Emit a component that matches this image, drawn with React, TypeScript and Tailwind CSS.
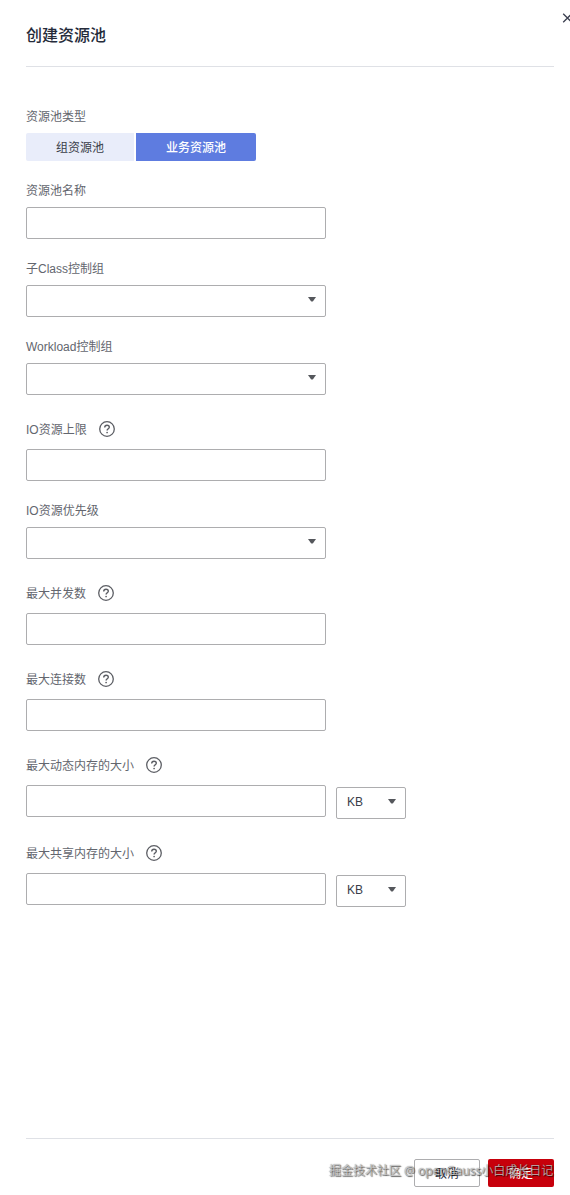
import type { ReactNode } from "react";

function HelpIcon() {
  return (
    <svg width="16" height="16" viewBox="0 0 16 16" fill="none" stroke="#5c5e64" className="shrink-0">
      <circle cx="8" cy="8" r="7.3" strokeWidth="1.3" />
      <path d="M5.7 6.4C5.7 5 6.6 4.2 8 4.2s2.3.8 2.3 2c0 1.4-2.2 1.6-2.2 3.2" strokeWidth="1.4" />
      <circle cx="8.1" cy="11.5" r="0.85" fill="#5c5e64" stroke="none" />
    </svg>
  );
}

function Arrow() {
  return (
    <svg width="8" height="5" viewBox="0 0 8 5" className="mb-[3px] shrink-0">
      <path d="M0 0h8L5 4.2q-1 .8-2 0z" fill="#55575c" />
    </svg>
  );
}

function Input() {
  return <input className="block h-8 w-[300px] rounded-[2px] border border-[#adadaf] bg-white px-2.5 outline-none" />;
}

function Select({ value = "", small = false }: { value?: string; small?: boolean }) {
  return (
    <button
      className={`flex h-8 items-center justify-between rounded-[2px] border border-[#adadaf] bg-white pl-2.5 pr-[9px] text-[#3a3e49] ${small ? "w-[70px]" : "w-[300px]"}`}
    >
      <span className="pb-[2px]">{value}</span>
      <Arrow />
    </button>
  );
}

function Field({ label, help = false, children }: { label: string; help?: boolean; children: ReactNode }) {
  return (
    <div className={help ? "pt-[26px]" : "pt-[21px]"}>
      <div className={`flex h-4 items-center gap-3 text-[#63666e] ${help ? "mb-3" : "mb-[9px]"}`}>
        <span className="pt-0.5">{label}</span>
        {help && <HelpIcon />}
      </div>
      {children}
    </div>
  );
}

function MemoryRow() {
  return (
    <div className="flex h-[34px] gap-2.5">
      <Input />
      <div className="pt-0.5">
        <Select value="KB" small />
      </div>
    </div>
  );
}

export default function App() {
  return (
    <div className="relative flex h-[1195px] w-full flex-col overflow-hidden bg-white px-[26px] pr-4 font-['Liberation_Sans','Noto_Sans_CJK_SC',sans-serif] text-xs leading-4">
      <button className="absolute left-[562px] top-[13px]" aria-label="关闭">
        <svg width="11" height="10" viewBox="0 0 11 10" stroke="#3c4050" strokeWidth="1.3">
          <path d="M1.2 0.7l8.6 8.6M9.8 0.7L1.2 9.3" />
        </svg>
      </button>
      <header className="h-[67px] w-[528px] border-b border-[#dfe1e6] pt-6">
        <h1 className="text-base font-medium leading-6 text-[#252b3a]">创建资源池</h1>
      </header>
      <main className="flex-1 pt-5">
        <Field label="资源池类型">
          <div className="flex h-7 gap-0.5">
            <button className="w-[108px] rounded-l-[2px] bg-[#e9edfa] pt-0.5 text-[#3a3e49]">组资源池</button>
            <button className="w-[120px] rounded-r-[2px] bg-[#5e7ce0] pt-0.5 font-medium text-white">业务资源池</button>
          </div>
        </Field>
        <Field label="资源池名称"><Input /></Field>
        <Field label="子Class控制组"><Select /></Field>
        <Field label="Workload控制组"><Select /></Field>
        <Field label="IO资源上限" help><Input /></Field>
        <Field label="IO资源优先级"><Select /></Field>
        <Field label="最大并发数" help><Input /></Field>
        <Field label="最大连接数" help><Input /></Field>
        <Field label="最大动态内存的大小" help><MemoryRow /></Field>
        <Field label="最大共享内存的大小" help><MemoryRow /></Field>
      </main>
      <footer className="flex h-[57px] w-[528px] justify-end gap-2 border-t border-[#dfe1e6] pt-5">
        <button className="h-7 w-[66px] rounded-[2px] border border-[#adadaf] bg-white pt-0.5 text-[#252b3a]">取消</button>
        <button className="h-7 w-[66px] rounded-[2px] bg-[#c7000b] pt-0.5 text-white">确定</button>
      </footer>
      <div className="pointer-events-none absolute left-[329px] top-[1163px] whitespace-nowrap font-['Noto_Sans','Noto_Sans_CJK_SC',sans-serif] text-[#e4e4e4]/70 [text-shadow:1px_1px_1px_rgba(0,0,0,0.6),0_0_1px_rgba(0,0,0,0.5)]">
        掘金技术社区 @ openGauss小白成长日记
      </div>
    </div>
  );
}
